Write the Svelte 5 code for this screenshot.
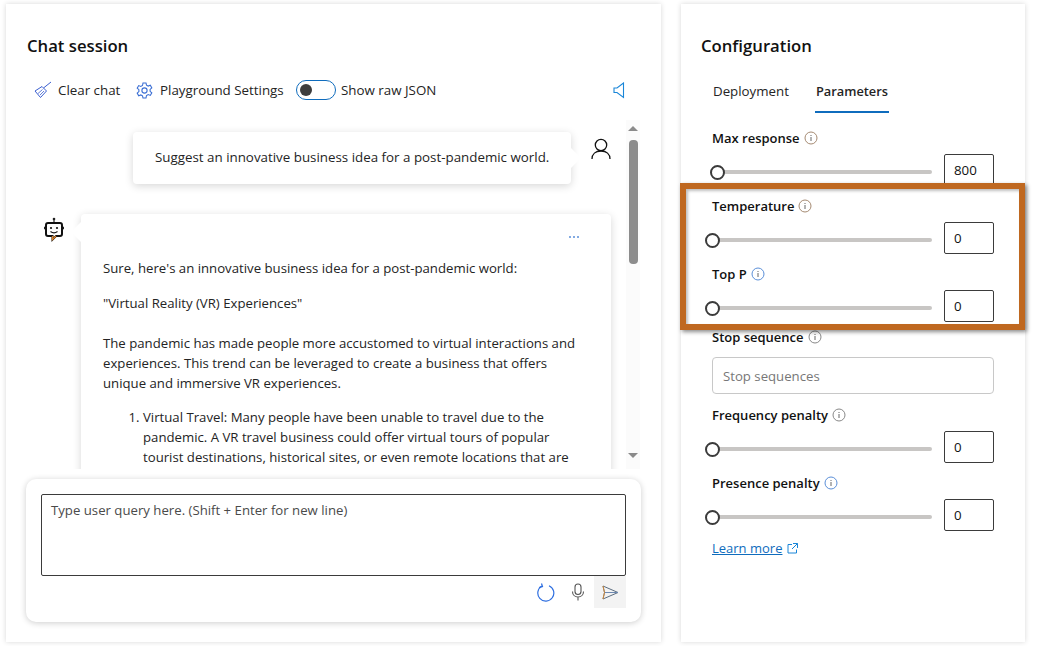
<script lang="ts">
  type Param = { label: string; value: number; offset: number; infoTone: string };

  const topParams: Param[] = [
    { label: 'Max response', value: 800, offset: 5, infoTone: 'brown' },
    { label: 'Temperature', value: 0, offset: 0, infoTone: 'brown' },
    { label: 'Top P', value: 0, offset: 0, infoTone: 'blue' }
  ];
  const bottomParams: Param[] = [
    { label: 'Frequency penalty', value: 0, offset: 0, infoTone: 'grey' },
    { label: 'Presence penalty', value: 0, offset: 0, infoTone: 'blue' }
  ];
</script>

{#snippet info(tone: string)}
  <svg class="info {tone}" width="14" height="14" viewBox="0 0 14 14" fill="none">
    <circle cx="7" cy="7" r="6" stroke="currentColor" />
    <path d="M7 6v4M7 4v1" stroke="#666" />
  </svg>
{/snippet}

{#snippet paramRow(p: Param)}
  <div class="param">
    <div class="label">{p.label} {@render info(p.infoTone)}</div>
    <div class="param-body">
      <div class="slider">
        <div class="track"></div>
        <div class="thumb" style="margin-left: {p.offset}px"></div>
      </div>
      <div class="num">{p.value}</div>
    </div>
  </div>
{/snippet}

<div class="page">
  <section class="panel chat">
    <h2>Chat session</h2>

    <div class="toolbar">
      <svg class="broom" width="18" height="18" viewBox="0 0 18 18" fill="none" stroke="#3b5fd0">
        <path d="M17 1 9.500 7" stroke-width="1" />
        <path d="M8 5.500 12.500 10 6.500 16.500 1 10Z" stroke-width="1" />
        <path d="M4 12.500 8.500 8.500M6 14 10 10" stroke-width=".8" />
      </svg>
      <span class="tool-text clear">Clear chat</span>
      <svg class="gear" width="17" height="17" viewBox="0 0 17 17" fill="none" stroke="#3b6fd4" stroke-width="1.100">
        <circle cx="8.500" cy="8.500" r="2.600" />
        <path d="M7 1h3l.5 2.200 1.700.9 2.100-.8 1.500 2.600-1.700 1.500v1.900l1.700 1.500-1.500 2.600-2.100-.8-1.700.9L10 16H7l-.5-2.200-1.700-.9-2.100.8L1.200 11.100l1.700-1.500V7.700L1.200 6.200l1.500-2.600 2.100.8 1.700-.9Z" />
      </svg>
      <span class="tool-text settings">Playground Settings</span>
      <div class="toggle"><div class="knob"></div></div>
      <span class="tool-text json">Show raw JSON</span>
      <svg class="speaker" width="12" height="17" viewBox="0 0 12 17" fill="none" stroke="#1a86d8" stroke-width="1.100">
        <path d="M1 6v4.500h3l6.500 5V1L4 6Z" />
      </svg>
    </div>

    <div class="scroll-area">
      <div class="messages">
        <div class="user-row">
          <div class="bubble user-bubble">Suggest an innovative business idea for a post-pandemic world.</div>
          <svg class="user-icon" width="20" height="22" viewBox="0 0 20 22" fill="none" stroke="#111" stroke-width="1.300">
            <circle cx="10" cy="7" r="5.700" />
            <path d="M1 21c0-5 3.500-8 9-8s9 3 9 8" />
          </svg>
        </div>

        <div class="bot-row">
          <svg class="bot-icon" width="22" height="26" viewBox="0 0 22 26" fill="none">
            <circle cx="11" cy="2" r="1.300" fill="#222" />
            <path d="M11 2v4" stroke="#222" stroke-width="1.200" />
            <path d="M1 11h2M19 11h2" stroke="#222" stroke-width="2.500" />
            <path d="M5 6h12a2 2 0 0 1 2 2v9a2 2 0 0 1-2 2h-4l-3.500 3.500V19H5a2 2 0 0 1-2-2V8a2 2 0 0 1 2-2Z" stroke="#111" stroke-width="2" />
            <path d="M9.500 19v3.500l3.500-3.500" stroke="#d9822b" stroke-width="1.300" />
            <circle cx="8" cy="11" r="1.100" fill="#111" />
            <circle cx="14" cy="11" r="1.100" fill="#111" />
            <path d="M7.500 14.500c2 1.500 5 1.500 7 0" stroke="#111" stroke-width="1.100" />
          </svg>
          <div class="bubble bot-bubble">
            <div class="more"><span></span><span></span><span></span></div>
            <p class="first">Sure, here's an innovative business idea for a post-pandemic world:</p>
            <p class="second">"Virtual Reality (VR) Experiences"</p>
            <p class="third">The pandemic has made people more accustomed to virtual interactions and experiences. This trend can be leveraged to create a business that offers unique and immersive VR experiences.</p>
            <ol>
              <li>Virtual Travel: Many people have been unable to travel due to the pandemic. A VR travel business could offer virtual tours of popular tourist destinations, historical sites, or even remote locations that are</li>
            </ol>
          </div>
        </div>
      </div>
      <div class="scrollbar">
        <div class="arrow up"></div>
        <div class="scroll-thumb"></div>
        <div class="arrow down"></div>
      </div>
    </div>

    <div class="composer">
      <div class="query">Type user query here. (Shift + Enter for new line)</div>
      <div class="composer-actions">
        <svg class="refresh" width="19" height="19" viewBox="0 0 19 19" fill="none" stroke="#2f6fe0" stroke-width="1.200">
          <path d="M6 3A8 8 0 1 0 13 2.700" />
          <path d="M5.500 .5 6.500 3.500 3 4.500" />
        </svg>
        <svg class="mic" width="14" height="18" viewBox="0 0 14 18" fill="none" stroke="#555" stroke-width="1.100">
          <rect x="4" y="1" width="6" height="10.500" rx="3" />
          <path d="M1.500 8.500c0 3.200 2.300 5.500 5.500 5.500s5.500-2.300 5.500-5.500M7 14v3.500" />
        </svg>
        <div class="send">
          <svg width="17" height="15" viewBox="0 0 17 15" fill="none" stroke-width="1">
            <path d="M1 1 16 7.500 1 14 2.500 7.500Z" stroke="#5b6d80" />
            <path d="M2.500 7.500H16" stroke="#6d88b0" />
            <path d="M1 1 2.500 7.500 1 14" stroke="#d08a3c" />
          </svg>
        </div>
      </div>
    </div>
  </section>

  <section class="panel config">
    <h2>Configuration</h2>
    <div class="tabs">
      <div class="tab">Deployment</div>
      <div class="tab active">Parameters</div>
    </div>

    <div class="params">
      {#each topParams as p}
        {@render paramRow(p)}
      {/each}

      <div class="param stop">
        <div class="label">Stop sequence {@render info('grey')}</div>
        <div class="stop-input">Stop sequences</div>
      </div>

      {#each bottomParams as p}
        {@render paramRow(p)}
      {/each}

      <div class="learn">
        <span class="link">Learn more</span>
        <svg width="11" height="11" viewBox="0 0 11 11" fill="none" stroke="#1a86d8">
          <path d="M5 1.500H1v8.500h8.500V6.500M6 .5h4.500V5M10.500 .5 5 6" />
        </svg>
      </div>
    </div>

    <div class="highlight"></div>
  </section>
</div>

<style>
  :global(body) {
    background: #fff;
    font-family: "Open Sans", "Noto Sans", sans-serif;
    color: #242424;
  }

  .page {
    display: flex;
    gap: 20px;
    padding: 4px 0 0 6px;
    height: 646px;
    box-sizing: border-box;
  }

  .panel {
    position: relative;
    height: 638px;
    background: #fff;
    box-shadow: 0 0 5px rgba(0, 0, 0, 0.16);
    box-sizing: border-box;
  }

  h2 {
    margin: 0;
    font-size: 16.700px;
    font-weight: 600;
    line-height: 24px;
    color: #111;
  }

  /* chat side */
  .chat {
    width: 655px;
    padding: 30px 20px 0 21px;
  }

  .toolbar {
    display: flex;
    align-items: center;
    height: 24px;
    margin-top: 20px;
    font-size: 13.350px;
  }

  .broom {
    margin-left: 7px;
    margin-right: 6px;
  }

  .tool-text {
    white-space: nowrap;
    color: #242424;
  }

  .clear {
    width: 62px;
  }

  .gear {
    margin-left: 16px;
    margin-right: 7px;
  }

  .settings {
    width: 124px;
  }

  .toggle {
    width: 40px;
    height: 20px;
    margin-left: 12px;
    box-sizing: border-box;
    border: 1px solid #0f6cbd;
    border-radius: 10px;
    display: flex;
    align-items: center;
    padding-left: 3px;
  }

  .knob {
    width: 12px;
    height: 12px;
    border-radius: 50%;
    background: #3d3d3d;
  }

  .json {
    margin-left: 5px;
    width: 96px;
  }

  .speaker {
    margin-left: 176px;
  }

  .scroll-area {
    display: flex;
    height: 349px;
    margin: 18px -20px 0 -21px;
    overflow: hidden;
  }

  .messages {
    width: 620px;
    flex-shrink: 0;
  }

  .user-row {
    display: flex;
    align-items: flex-start;
    margin-top: 12px;
    padding-left: 127px;
  }

  .bubble {
    position: relative;
    background: #fff;
    border-radius: 4px;
    box-shadow: 0 2px 8px rgba(0, 0, 0, 0.16);
    font-size: 13.350px;
    box-sizing: border-box;
  }

  .bubble::after {
    content: "";
    position: absolute;
    width: 14px;
    height: 14px;
    background: #fff;
    transform: rotate(45deg);
  }

  .user-bubble {
    width: 438px;
    height: 52px;
    padding-left: 22px;
    line-height: 50px;
    white-space: nowrap;
  }

  .user-bubble::after {
    right: -7px;
    top: 19px;
  }

  .user-icon {
    margin: 6px 0 0 20px;
  }

  .bot-row {
    display: flex;
    align-items: flex-start;
    margin-top: 30px;
    padding-left: 37px;
  }

  .bot-icon {
    margin-top: 3px;
    margin-right: 16px;
  }

  .bot-bubble {
    width: 530px;
    height: 300px;
    padding: 44px 30px 0 22px;
    font-size: 13.200px;
    line-height: 20px;
  }

  .bot-bubble::after {
    left: -7px;
    top: 11px;
  }

  .more {
    position: absolute;
    top: 22px;
    left: 488px;
    display: flex;
    gap: 2px;
  }

  .more span {
    width: 2px;
    height: 2px;
    background: #5b8fd8;
    border-radius: 50%;
  }

  p {
    margin: 0;
  }

  .second {
    margin-top: 15px;
  }

  .third {
    margin-top: 20px;
  }

  ol {
    margin: 14px 0 0;
    padding-left: 40px;
  }

  .scrollbar {
    width: 14px;
    margin-left: 0;
    background: #fbfbfb;
    display: flex;
    flex-direction: column;
    align-items: center;
    flex-shrink: 0;
  }

  .arrow {
    width: 0;
    height: 0;
    border-left: 5px solid transparent;
    border-right: 5px solid transparent;
  }

  .arrow.up {
    margin-top: 6px;
    border-bottom: 5px solid #8a8a8a;
  }

  .arrow.down {
    margin-top: 189px;
    border-top: 5px solid #8a8a8a;
  }

  .scroll-thumb {
    width: 9px;
    height: 124px;
    margin-top: 9px;
    border-radius: 4px;
    background: #8c8c8c;
  }

  .composer {
    width: 615px;
    height: 143px;
    margin: 10px 0 0 -1px;
    padding: 15px 15px 0;
    background: #fff;
    border-radius: 10px;
    box-shadow: 0 1px 6px rgba(0, 0, 0, 0.2);
    box-sizing: border-box;
  }

  .query {
    height: 82px;
    padding: 6px 9px;
    border: 1px solid #3b3b3b;
    border-radius: 2px;
    font-size: 13.200px;
    line-height: 19px;
    color: #4a4a4a;
    box-sizing: border-box;
  }

  .composer-actions {
    display: flex;
    justify-content: flex-end;
    align-items: center;
  }

  .refresh {
    margin-right: 16px;
  }

  .mic {
    margin-right: 9px;
  }

  .send {
    width: 32px;
    height: 32px;
    background: #f3f3f3;
    display: flex;
    align-items: center;
    justify-content: center;
  }

  /* config side */
  .config {
    width: 344px;
    padding: 30px 31px 0 20px;
  }

  .tabs {
    display: flex;
    gap: 25px;
    height: 33px;
    margin: 23px 0 0 11px;
    font-size: 13.300px;
    line-height: 20px;
  }

  .tab {
    height: 32px;
    box-sizing: border-box;
    white-space: nowrap;
    color: #242424;
    padding: 0 1px;
  }

  .tab.active {
    font-weight: 600;
    font-size: 12.800px;
    padding: 0 1px;
    border-bottom: 2px solid #0f6cbd;
  }

  .params {
    margin: 14px 0 0 11px;
  }

  .param {
    margin-bottom: 10px;
  }

  .label {
    height: 20px;
    display: flex;
    align-items: center;
    gap: 4px;
    font-size: 13px;
    font-weight: 600;
    color: #111;
  }

  .info.brown {
    color: #a58a72;
  }

  .info.blue {
    color: #5b8fd8;
  }

  .info.grey {
    color: #888;
  }

  .param-body {
    display: flex;
    align-items: center;
    gap: 12px;
    margin-top: 6px;
  }

  .slider {
    position: relative;
    width: 220px;
    height: 32px;
    padding-top: 4px;
    box-sizing: border-box;
    display: flex;
    align-items: center;
  }

  .track {
    width: 100%;
    height: 4px;
    background: #c8c6c4;
    border-radius: 2px;
  }

  .thumb {
    position: absolute;
    left: -7px;
    width: 15px;
    height: 15px;
    box-sizing: border-box;
    border: 2px solid #3b3b3b;
    border-radius: 50%;
    background: #fff;
  }

  .num {
    width: 50px;
    height: 32px;
    box-sizing: border-box;
    border: 1px solid #3b3b3b;
    border-radius: 2px;
    padding-left: 9px;
    font-size: 13.300px;
    line-height: 30px;
    color: #111;
  }

  .stop {
    margin-top: -5px;
    margin-bottom: 11px;
  }

  .stop-input {
    width: 282px;
    height: 37px;
    margin-top: 10px;
    box-sizing: border-box;
    border: 1px solid #c8c8c8;
    border-radius: 4px;
    padding-left: 10px;
    font-size: 13.200px;
    line-height: 37px;
    color: #777;
  }

  .learn {
    display: flex;
    align-items: center;
    gap: 5px;
    height: 20px;
    margin-top: -3px;
    font-size: 13px;
  }

  .link {
    color: #0f6cbd;
    text-decoration: underline;
  }

  .highlight {
    position: absolute;
    left: -1px;
    top: 179px;
    width: 345px;
    height: 147px;
    box-sizing: border-box;
    border: 6px solid #bf6820;
    box-shadow: 2px 2px 4px rgba(0, 0, 0, 0.45), inset 2px 2px 3px rgba(0, 0, 0, 0.25);
    pointer-events: none;
  }
</style>
